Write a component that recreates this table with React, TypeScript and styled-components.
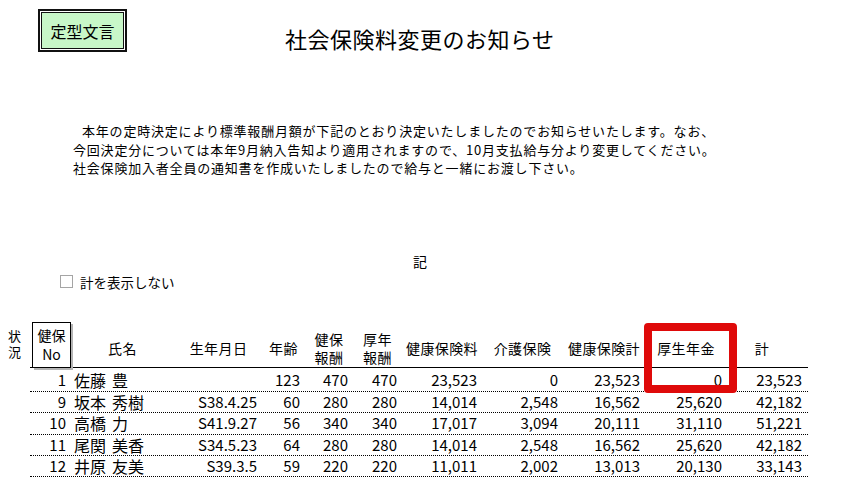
import React from 'react';
import styled, { createGlobalStyle } from 'styled-components';

const GlobalStyle = createGlobalStyle`
  html, body { margin: 0; padding: 0; background: #fff; }
  body {
    font-family: "Noto Sans CJK JP", "Noto Sans", sans-serif;
    color: #000;
  }
`;

const COLS = '40px 105px 87px 43px 48px 49px 80px 81px 82px 82px 81px';

const Page = styled.div`
  width: 850px;
  height: 478px;
  overflow: hidden;
  padding-top: 9px;
  box-sizing: border-box;
`;

const Header = styled.div`
  display: flex;
  align-items: flex-start;
  height: 43px;
`;

const TemplateButton = styled.button`
  margin-left: 38px;
  width: 89px;
  height: 43px;
  box-sizing: border-box;
  padding: 0;
  background: #c8f7c8;
  border: 2px solid #111;
  box-shadow: inset 0 0 0 1px #fff, inset 0 0 0 2px #111;
  font-family: inherit;
  font-size: 16px;
  line-height: 1;
  color: #000;
`;

const Title = styled.h1`
  margin: 16px 0 0 158px;
  font-size: 22px;
  font-weight: normal;
  line-height: 26px;
  letter-spacing: 0.5px;
`;

const Notice = styled.div`
  margin-top: 70px;
  padding-left: 73px;
  font-size: 13px;
  letter-spacing: 0.8px;
  line-height: 18.5px;
  white-space: nowrap;
`;

const NoticeLine = styled.div<{ $indent?: number }>`
  text-indent: ${(p) => p.$indent ?? 0}px;
`;

const Ki = styled.div`
  margin-top: 74.5px;
  padding-right: 10px;
  text-align: center;
  font-size: 14px;
  line-height: 18px;
`;

const CheckRow = styled.label`
  display: flex;
  align-items: center;
  margin-top: 2.5px;
  padding-left: 60px;
  height: 18px;
  font-size: 13.5px;
  line-height: 18px;
`;

const CheckBox = styled.span`
  width: 13px;
  height: 13px;
  box-sizing: border-box;
  border: 1px solid #a5a5a5;
  background: #fff;
  margin-right: 7px;
`;

const TableArea = styled.div`
  position: relative;
  display: flex;
  margin-top: 31.5px;
`;

const StatusLabel = styled.div`
  width: 30px;
  height: 46px;
  box-sizing: border-box;
  padding: 6px 0 0 8px;
  font-size: 13px;
  line-height: 16px;
`;

const MainTable = styled.div`
  width: 778px;
`;

const HeaderRow = styled.div`
  display: grid;
  grid-template-columns: ${COLS};
  height: 46px;
  box-sizing: border-box;
  border-bottom: 1px solid #000;
`;

const HeadCell = styled.div<{ $padRight?: number }>`
  display: flex;
  align-items: center;
  justify-content: center;
  text-align: center;
  padding-top: 5px;
  padding-right: ${(p) => p.$padRight ?? 0}px;
  font-size: 14px;
  line-height: 18px;
  letter-spacing: 0.4px;
`;

const NoBox = styled.div`
  margin-left: 2px;
  width: 39px;
  height: 46px;
  box-sizing: border-box;
  border: 1px solid #000;
  box-shadow: 2px 2px 0 #b4b4b4;
  display: flex;
  flex-direction: column;
  align-items: center;
  justify-content: center;
  font-size: 14px;
  line-height: 19px;
  background: #fff;
  position: relative;
  z-index: 1;
`;

const DataRow = styled.div<{ $first?: boolean }>`
  display: grid;
  grid-template-columns: ${COLS};
  height: ${(p) => (p.$first ? 24 : 21.3)}px;
  box-sizing: border-box;
  border-bottom: 1px dotted #000;
  align-items: center;
  font-size: 15px;
  line-height: 18px;
`;

const Num = styled.div<{ $pad?: number }>`
  text-align: right;
  padding-right: ${(p) => p.$pad ?? 5}px;
  white-space: nowrap;
`;

const Name = styled.div`
  padding-left: 4px;
  font-size: 16px;
  word-spacing: 2.5px;
  white-space: nowrap;
`;

const Highlight = styled.div`
  position: absolute;
  left: 644px;
  top: 1px;
  width: 93px;
  height: 70px;
  box-sizing: border-box;
  border: 8px solid #df0a0a;
  border-radius: 4px;
  z-index: 2;
  pointer-events: none;
`;

type Row = {
  no: string;
  name: string;
  birth: string;
  age: string;
  kenpoHoshu: string;
  kounenHoshu: string;
  kenkoHoken: string;
  kaigo: string;
  kenkoKei: string;
  kousei: string;
  total: string;
};

const rows: Row[] = [
  { no: '1', name: '佐藤 豊', birth: '', age: '123', kenpoHoshu: '470', kounenHoshu: '470', kenkoHoken: '23,523', kaigo: '0', kenkoKei: '23,523', kousei: '0', total: '23,523' },
  { no: '9', name: '坂本 秀樹', birth: 'S38.4.25', age: '60', kenpoHoshu: '280', kounenHoshu: '280', kenkoHoken: '14,014', kaigo: '2,548', kenkoKei: '16,562', kousei: '25,620', total: '42,182' },
  { no: '10', name: '高橋 力', birth: 'S41.9.27', age: '56', kenpoHoshu: '340', kounenHoshu: '340', kenkoHoken: '17,017', kaigo: '3,094', kenkoKei: '20,111', kousei: '31,110', total: '51,221' },
  { no: '11', name: '尾関 美香', birth: 'S34.5.23', age: '64', kenpoHoshu: '280', kounenHoshu: '280', kenkoHoken: '14,014', kaigo: '2,548', kenkoKei: '16,562', kousei: '25,620', total: '42,182' },
  { no: '12', name: '井原 友美', birth: 'S39.3.5', age: '59', kenpoHoshu: '220', kounenHoshu: '220', kenkoHoken: '11,011', kaigo: '2,002', kenkoKei: '13,013', kousei: '20,130', total: '33,143' },
];

export default function App() {
  return (
    <>
      <GlobalStyle />
      <Page>
        <Header>
          <TemplateButton type="button">定型文言</TemplateButton>
          <Title>社会保険料変更のお知らせ</Title>
        </Header>

        <Notice>
          <NoticeLine $indent={9}>本年の定時決定により標準報酬月額が下記のとおり決定いたしましたのでお知らせいたします。なお、</NoticeLine>
          <NoticeLine>今回決定分については本年9月納入告知より適用されますので、10月支払給与分より変更してください。</NoticeLine>
          <NoticeLine>社会保険加入者全員の通知書を作成いたしましたので給与と一緒にお渡し下さい。</NoticeLine>
        </Notice>

        <Ki>記</Ki>

        <CheckRow>
          <CheckBox />
          計を表示しない
        </CheckRow>

        <TableArea>
          <StatusLabel>
            状<br />況
          </StatusLabel>
          <MainTable>
            <HeaderRow>
              <div>
                <NoBox>
                  <span>健保</span>
                  <span>No</span>
                </NoBox>
              </div>
              <HeadCell>氏名</HeadCell>
              <HeadCell>生年月日</HeadCell>
              <HeadCell>年齢</HeadCell>
              <HeadCell>健保<br />報酬</HeadCell>
              <HeadCell>厚年<br />報酬</HeadCell>
              <HeadCell>健康保険料</HeadCell>
              <HeadCell>介護保険</HeadCell>
              <HeadCell>健康保険計</HeadCell>
              <HeadCell>厚生年金</HeadCell>
              <HeadCell $padRight={11}>計</HeadCell>
            </HeaderRow>
            {rows.map((r, i) => (
              <DataRow key={r.no} $first={i === 0}>
                <Num $pad={4}>{r.no}</Num>
                <Name>{r.name}</Name>
                <Num>{r.birth}</Num>
                <Num>{r.age}</Num>
                <Num>{r.kenpoHoshu}</Num>
                <Num>{r.kounenHoshu}</Num>
                <Num>{r.kenkoHoken}</Num>
                <Num>{r.kaigo}</Num>
                <Num>{r.kenkoKei}</Num>
                <Num>{r.kousei}</Num>
                <Num $pad={6}>{r.total}</Num>
              </DataRow>
            ))}
          </MainTable>
          <Highlight />
        </TableArea>
      </Page>
    </>
  );
}
